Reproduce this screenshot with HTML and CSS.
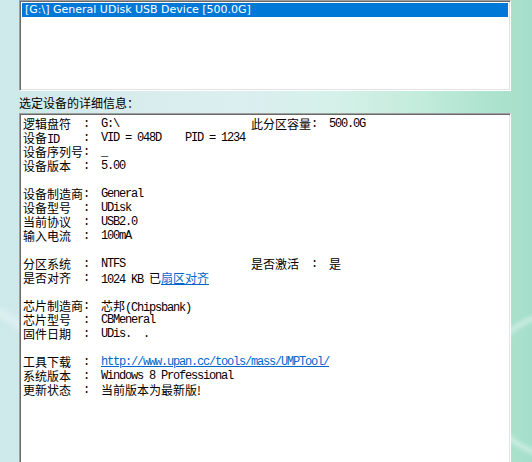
FILE: index.html
```html
<!DOCTYPE html>
<html lang="zh-CN">
<head>
<meta charset="utf-8">
<title>设备信息</title>
<link rel="stylesheet" href="styles.css">
</head>
<body>
<div class="page">
  <div class="listbox">
    <div class="item selected">[G:\] General UDisk USB Device [500.0G]</div>
  </div>
  <div class="caption">选定设备的详细信息：</div>
  <div class="details">
    <div class="row"><span class="k">逻辑盘符</span><span class="c m">:</span><span class="v m">G:\</span><span class="k2">此分区容量</span><span class="c m">:</span><span class="v m">500.0G</span></div>
    <div class="row"><span class="k">设备<span class="m">ID</span></span><span class="c m">:</span><span class="v m">VID = 048D    PID = 1234</span></div>
    <div class="row"><span class="k">设备序列号</span><span class="c m">:</span><span class="v m">_</span></div>
    <div class="row"><span class="k">设备版本</span><span class="c m">:</span><span class="v m">5.00</span></div>
    <div class="row blank"></div>
    <div class="row"><span class="k">设备制造商</span><span class="c m">:</span><span class="v m">General</span></div>
    <div class="row"><span class="k">设备型号</span><span class="c m">:</span><span class="v m">UDisk</span></div>
    <div class="row"><span class="k">当前协议</span><span class="c m">:</span><span class="v m">USB2.0</span></div>
    <div class="row"><span class="k">输入电流</span><span class="c m">:</span><span class="v m">100mA</span></div>
    <div class="row blank"></div>
    <div class="row"><span class="k">分区系统</span><span class="c m">:</span><span class="v m">NTFS</span><span class="k2">是否激活</span><span class="c m">:</span><span class="v">是</span></div>
    <div class="row"><span class="k">是否对齐</span><span class="c m">:</span><span class="v wide"><span class="m">1024 KB </span>已<a class="link" href="#">扇区对齐</a></span></div>
    <div class="row blank"></div>
    <div class="row"><span class="k">芯片制造商</span><span class="c m">:</span><span class="v wide">芯邦<span class="m">(Chipsbank)</span></span></div>
    <div class="row"><span class="k">芯片型号</span><span class="c m">:</span><span class="v m">CBMeneral</span></div>
    <div class="row"><span class="k">固件日期</span><span class="c m">:</span><span class="v m">UDis.  .</span></div>
    <div class="row blank"></div>
    <div class="row"><span class="k">工具下载</span><span class="c m">:</span><span class="v wide m"><a class="link" href="#">http://www.upan.cc/tools/mass/UMPTool/</a></span></div>
    <div class="row"><span class="k">系统版本</span><span class="c m">:</span><span class="v wide m">Windows 8 Professional</span></div>
    <div class="row"><span class="k">更新状态</span><span class="c m">:</span><span class="v wide">当前版本为最新版!</span></div>
  </div>
</div>
</body>
</html>
```

FILE: styles.css
```css
html, body {
  margin: 0;
  padding: 0;
  height: 100%;
  overflow: hidden;
}

body {
  background:
    radial-gradient(ellipse 120px 90px at 585px 385px, rgba(255,255,255,0) 80%, rgba(255,255,255,0.35) 86%, rgba(255,255,255,0) 92%),
    radial-gradient(ellipse 160px 140px at -70px 420px, rgba(255,255,255,0) 82%, rgba(255,255,255,0.3) 88%, rgba(255,255,255,0) 94%),
    linear-gradient(90deg, #cde9ea 0%, #d8ecee 25%, #dbeef0 45%, #d6f1ea 62%, #c4ecdc 78%, #ade3cf 92%, #a5dfcb 100%);
  font-family: "Noto Sans CJK SC", sans-serif;
  font-size: 12px;
  color: #000;
}

.page {
  padding-left: 19px;
  width: 492px;
}

.listbox,
.details {
  box-sizing: border-box;
  background: #fff;
  border: 1px solid;
  border-color: #a0a0a0 #ffffff #ffffff #a0a0a0;
  box-shadow: inset 1px 1px 0 #696969, inset -1px -1px 0 #e3e3e3;
}

.listbox {
  height: 91px;
  padding: 2px 2px;
}

.item {
  height: 14px;
  line-height: 14px;
  padding-left: 3px;
  font-family: "DejaVu Sans", sans-serif;
  font-size: 11px;
  white-space: pre;
}

.item.selected {
  background: #0078d7;
  color: #fff;
}

.caption {
  margin-top: 5px;
  height: 17px;
  line-height: 14px;
  font-size: 12px;
}

.details {
  height: 352px;
  padding: 3px 2px 0 3px;
}

.row {
  display: grid;
  grid-template-columns: 60px 18px 150px 60px 18px auto;
  height: 14px;
  line-height: 14px;
  white-space: pre;
}

.k, .k2 {
  font-size: 12px;
}

.v.wide {
  grid-column: 3 / 7;
}

.m {
  font-family: "Liberation Mono", monospace;
  font-size: 12px;
  letter-spacing: -1.2px;
}

.link {
  color: #0066cc;
  text-decoration: underline;
}
```
